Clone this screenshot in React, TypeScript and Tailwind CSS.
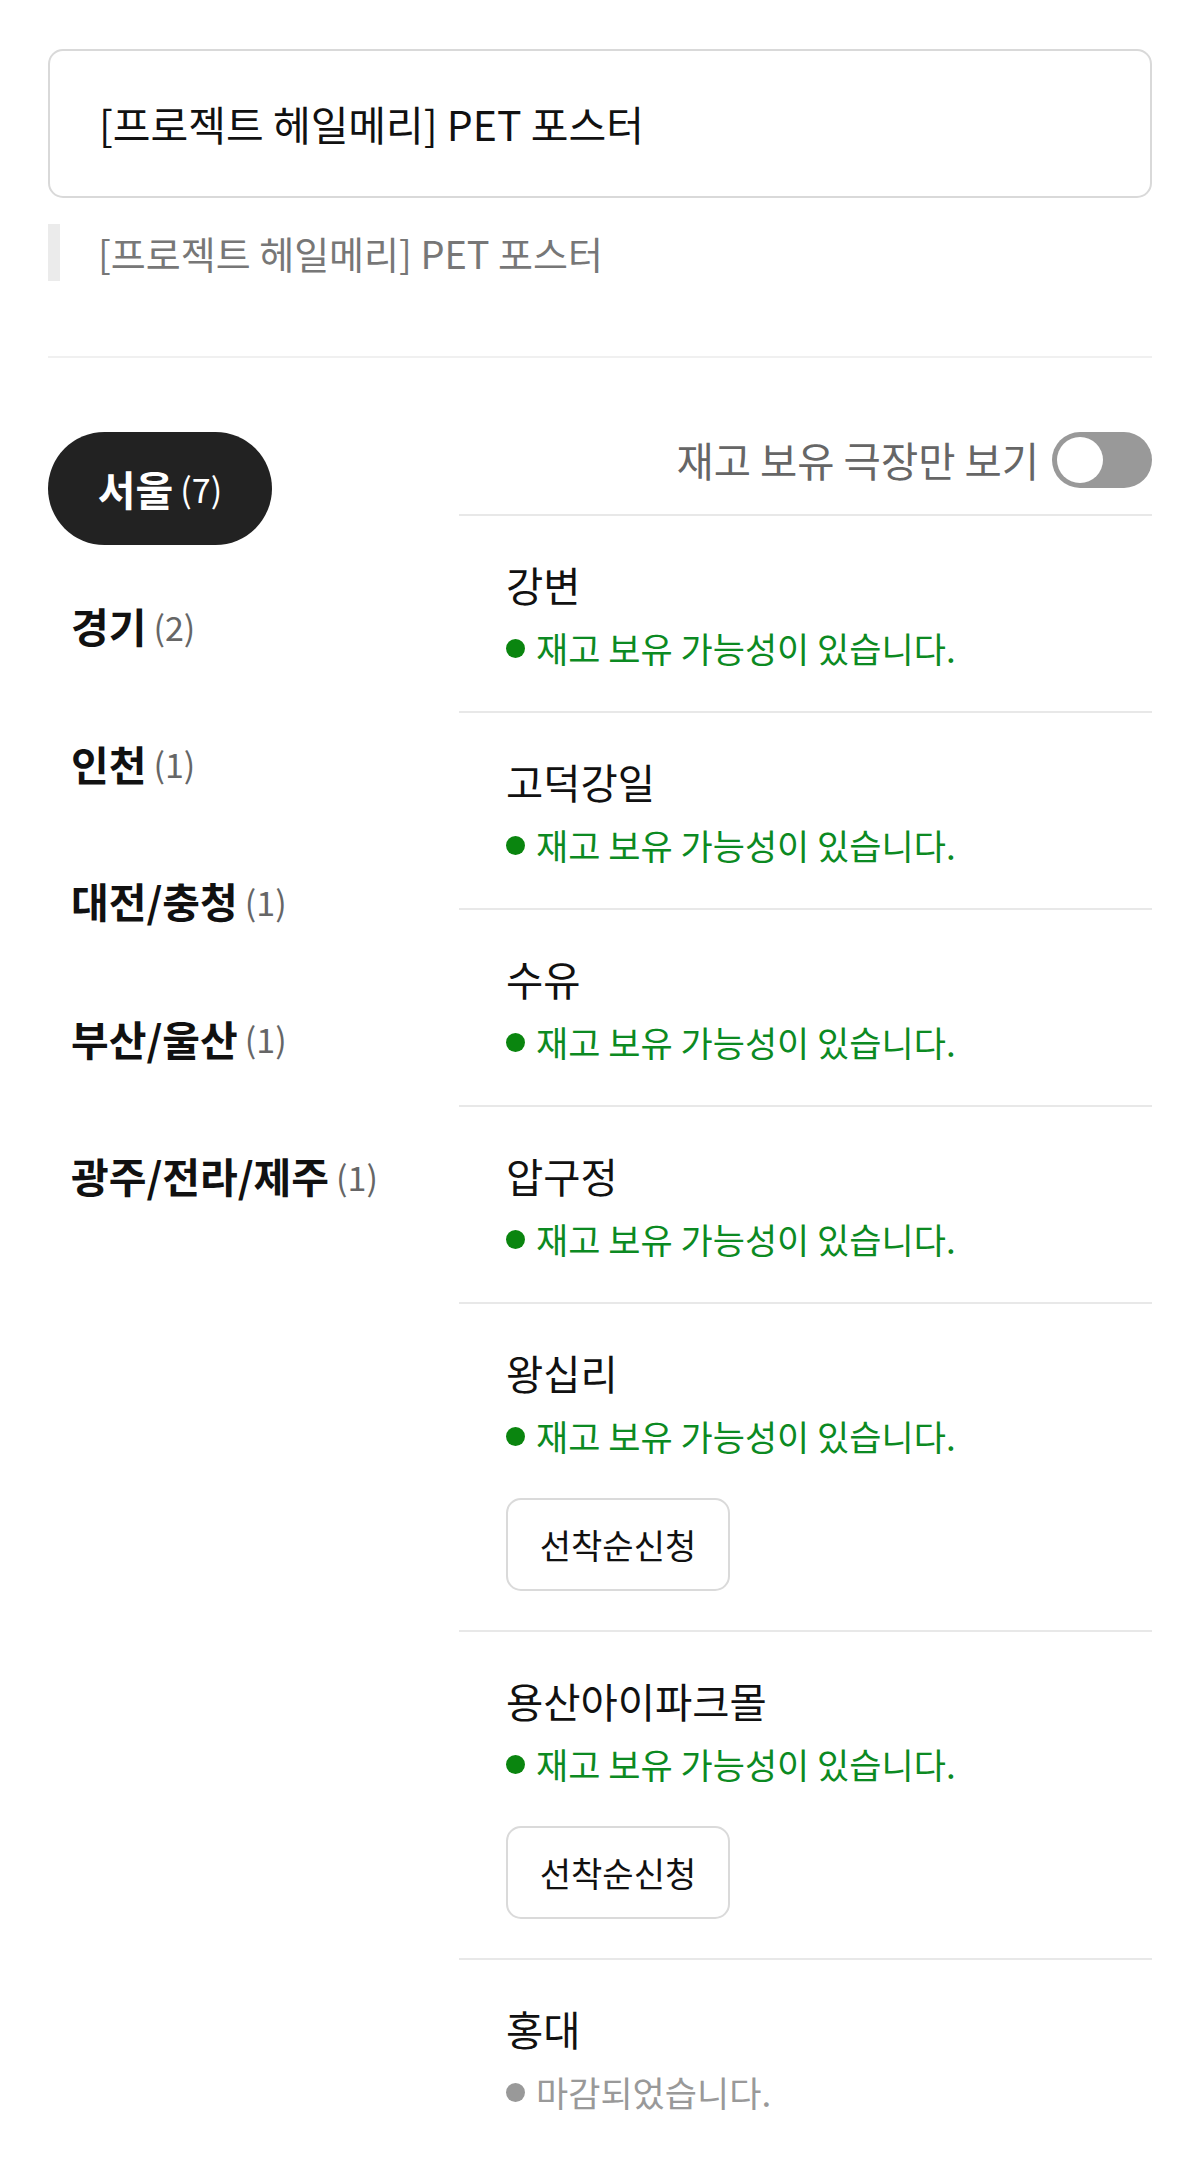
import React from 'react';

type Store = { name: string; open: boolean; apply?: boolean };

const regions = [
  { name: '서울', count: 7 },
  { name: '경기', count: 2 },
  { name: '인천', count: 1 },
  { name: '대전/충청', count: 1 },
  { name: '부산/울산', count: 1 },
  { name: '광주/전라/제주', count: 1 },
];

const stores: Store[] = [
  { name: '강변', open: true },
  { name: '고덕강일', open: true },
  { name: '수유', open: true },
  { name: '압구정', open: true },
  { name: '왕십리', open: true, apply: true },
  { name: '용산아이파크몰', open: true, apply: true },
  { name: '홍대', open: false },
];

const font = { fontFamily: '"Noto Sans CJK KR", "Noto Sans", sans-serif' };

const App: React.FC = () => {
  return (
    <div className="bg-white min-h-[2165px] px-[48px] pt-[49px] text-[#111]" style={font}>
      {/* Title input */}
      <div className="h-[149px] rounded-[15px] border-2 border-[#d9d9d9] flex items-center pl-[49px]">
        <span className="text-[41px] leading-none">[프로젝트 헤일메리] PET 포스터</span>
      </div>

      {/* Preview quote */}
      <div className="mt-[26px] h-[57px] border-l-[12px] border-[#ebebeb] flex items-center pl-[38px]">
        <span className="text-[38px] leading-none text-[#777]">[프로젝트 헤일메리] PET 포스터</span>
      </div>

      <div className="mt-[75px] h-[2px] bg-[#f0f0f0]" />

      {/* Regions + theaters */}
      <div className="mt-[74px] flex">
        {/* Region list */}
        <div className="w-[411px] flex flex-col gap-[24.5px]">
          {regions.map((r, i) =>
            i === 0 ? (
              <div key={r.name} className="w-[224px] h-[113px] rounded-full bg-[#222] flex items-center justify-center text-white">
                <span className="text-[41px] font-bold">{r.name}</span>
                <span className="ml-[7px] text-[34px]">({r.count})</span>
              </div>
            ) : (
              <div key={r.name} className="h-[113px] flex items-center pl-[23px]">
                <span className="text-[41px] font-bold text-[#111]">{r.name}</span>
                <span className="ml-[7px] text-[34px] text-[#666]">({r.count})</span>
              </div>
            )
          )}
        </div>

        {/* Theater list */}
        <div className="flex-1">
          <div className="h-[56px] flex items-center justify-end gap-[13px]">
            <span className="text-[40.5px] text-[#666] leading-none">재고 보유 극장만 보기</span>
            <div className="w-[100px] h-[56px] rounded-full bg-[#999] flex items-center pl-[5px]">
              <div className="w-[46px] h-[46px] rounded-full bg-white" />
            </div>
          </div>

          <div className="mt-[26px]">
            {stores.map((s) => (
              <div
                key={s.name}
                className={
                  s.apply
                    ? 'border-t-2 border-[#e8e8e8] pl-[47px] pt-[43px] pb-[39px]'
                    : 'border-t-2 border-[#e8e8e8] pl-[47px] pt-[43px] pb-[41px]'
                }
              >
                <div className="text-[40.5px] leading-[52px] text-[#111]">{s.name}</div>
                <div className="mt-[15px] h-[44px] flex items-center">
                  <span
                    className={
                      s.open
                        ? 'w-[19px] h-[19px] rounded-full bg-[#0a850f] mr-[11px]'
                        : 'w-[19px] h-[19px] rounded-full bg-[#999] mr-[11px]'
                    }
                  />
                  <span
                    className={
                      s.open
                        ? 'text-[35px] leading-[44px] text-[#0c8a22]'
                        : 'text-[35px] leading-[44px] text-[#999]'
                    }
                  >
                    {s.open ? '재고 보유 가능성이 있습니다.' : '마감되었습니다.'}
                  </span>
                </div>
                {s.apply && (
                  <button className="mt-[40px] w-[224px] h-[93px] rounded-[15px] border-2 border-[#dadada] bg-white flex items-center justify-center text-[34px] text-[#111]">
                    선착순신청
                  </button>
                )}
              </div>
            ))}
          </div>
        </div>
      </div>
    </div>
  );
};

export default App;
